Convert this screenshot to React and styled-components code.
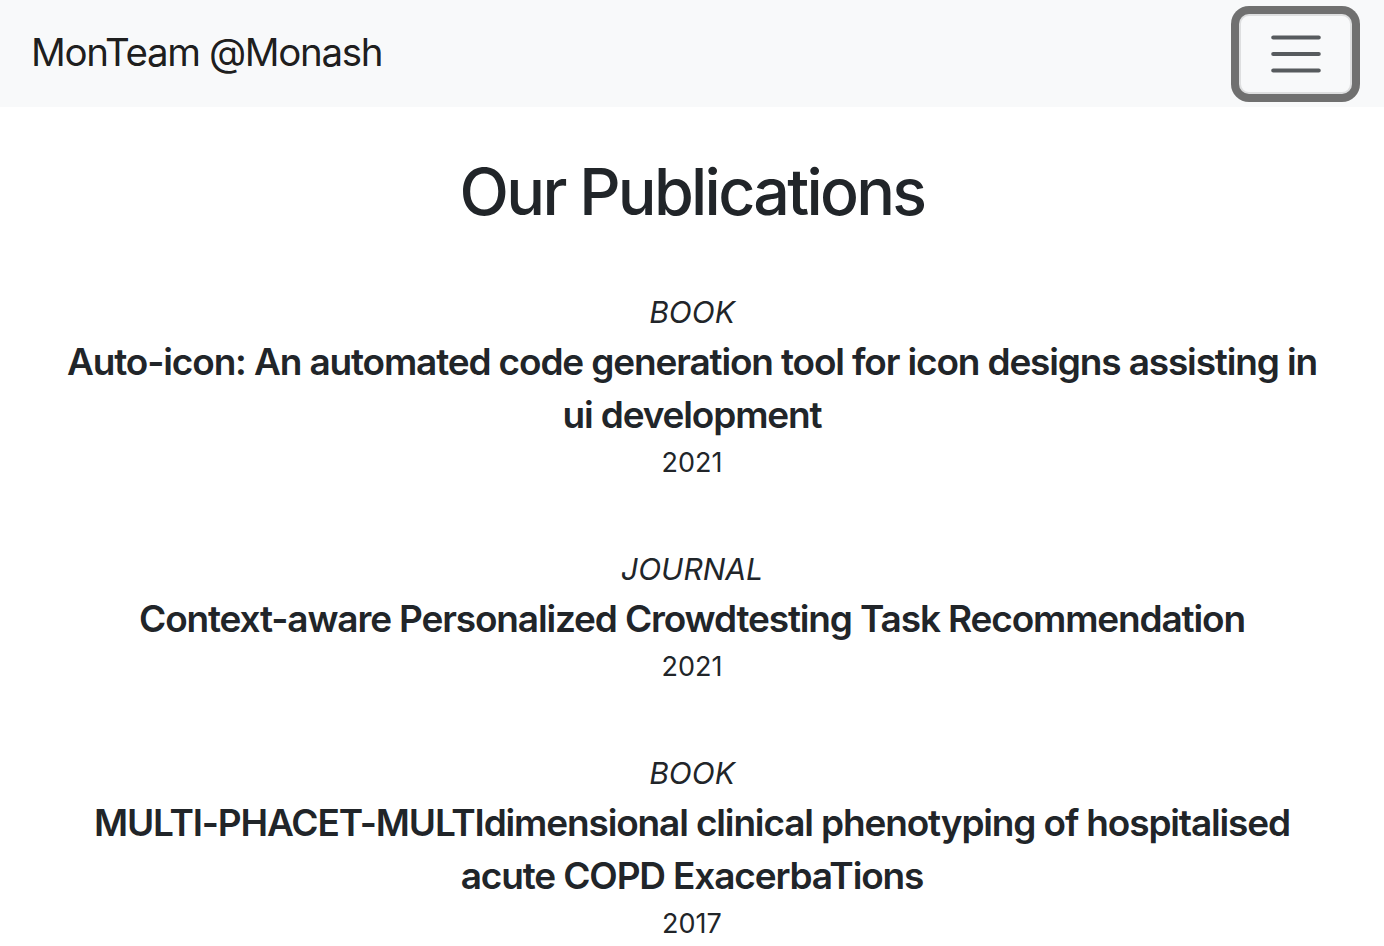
import React from "react";
import styled, { createGlobalStyle } from "styled-components";

const GlobalStyle = createGlobalStyle`
  body {
    margin: 0;
    background: #ffffff;
    font-family: Inter, "Noto Sans", sans-serif;
    color: #212529;
  }
`;

const Navbar = styled.nav`
  display: flex;
  align-items: center;
  justify-content: space-between;
  height: 107px;
  padding: 0 32px 0 31px;
  box-sizing: border-box;
  background-color: #f8f9fa;
`;

const Brand = styled.a`
  font-size: 38.5px;
  line-height: 48px;
  letter-spacing: -0.035em;
  margin-bottom: 3px;
  color: rgba(0, 0, 0, 0.9);
  text-decoration: none;
`;

const Toggler = styled.button`
  display: flex;
  align-items: center;
  justify-content: center;
  width: 113px;
  height: 80px;
  padding: 0;
  background: transparent;
  border: 2px solid rgba(0, 0, 0, 0.1);
  border-radius: 10px;
  box-shadow: 0 0 0 8px #707070;
  cursor: pointer;
`;

const Main = styled.main`
  display: flex;
  flex-direction: column;
  align-items: center;
  padding: 0 24px 40px;
  text-align: center;
`;

const Heading = styled.h1`
  margin: 46px 0 58px;
  font-size: 64.5px;
  line-height: 79px;
  font-weight: 500;
  letter-spacing: -0.042em;
`;

const List = styled.div`
  display: flex;
  flex-direction: column;
  gap: 65px;
`;

const Item = styled.div`
  display: flex;
  flex-direction: column;
  align-items: center;
`;

const Type = styled.div`
  font-size: 30px;
  line-height: 45px;
  font-style: italic;
`;

const Title = styled.h5`
  margin: 0;
  max-width: 1270px;
  font-size: 37px;
  line-height: 53px;
  font-weight: 600;
  letter-spacing: -0.031em;
`;

const Year = styled.div`
  margin-top: 2px;
  font-size: 27px;
  line-height: 39px;
`;

const publications = [
  {
    type: "BOOK",
    title:
      "Auto-icon: An automated code generation tool for icon designs assisting in ui development",
    year: 2021,
  },
  {
    type: "JOURNAL",
    title: "Context-aware Personalized Crowdtesting Task Recommendation",
    year: 2021,
  },
  {
    type: "BOOK",
    title:
      "MULTI-PHACET-MULTIdimensional clinical phenotyping of hospitalised acute COPD ExacerbaTions",
    year: 2017,
  },
];

function TogglerIcon() {
  return (
    <svg width="62" height="62" viewBox="0 0 30 30">
      <path
        d="M4 7h22M4 15h22M4 23h22"
        stroke="rgba(33, 37, 41, 0.75)"
        strokeWidth="2"
        strokeLinecap="round"
        strokeMiterlimit="10"
      />
    </svg>
  );
}

export default function App() {
  return (
    <>
      <GlobalStyle />
      <Navbar>
        <Brand href="#">MonTeam @Monash</Brand>
        <Toggler aria-label="Toggle navigation">
          <TogglerIcon />
        </Toggler>
      </Navbar>
      <Main>
        <Heading>Our Publications</Heading>
        <List>
          {publications.map((pub) => (
            <Item key={pub.title}>
              <Type>{pub.type}</Type>
              <Title>{pub.title}</Title>
              <Year>{pub.year}</Year>
            </Item>
          ))}
        </List>
      </Main>
    </>
  );
}
